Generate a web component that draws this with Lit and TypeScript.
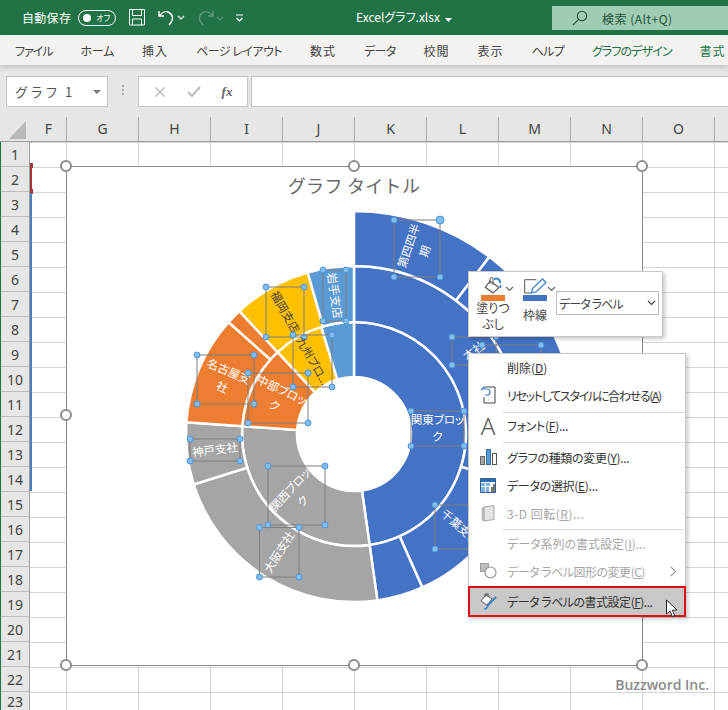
import { LitElement, html, css, svg } from "lit";
import { customElement } from "lit/decorators.js";

const CX = 354, CY = 434;
const BLUE = "#4472C4", ORANGE = "#ED7D31", GRAY = "#A5A5A5", YELLOW = "#FFC000", LBLUE = "#5B9BD5";

function pt(r: number, a: number): [number, number] {
  const t = (a * Math.PI) / 180;
  return [CX + r * Math.sin(t), CY - r * Math.cos(t)];
}
function seg(r0: number, r1: number, a0: number, a1: number) {
  const [x0, y0] = pt(r1, a0), [x1, y1] = pt(r1, a1), [x2, y2] = pt(r0, a1), [x3, y3] = pt(r0, a0);
  const l = a1 - a0 > 180 ? 1 : 0;
  return `M${x0} ${y0}A${r1} ${r1} 0 ${l} 1 ${x1} ${y1}L${x2} ${y2}A${r0} ${r0} 0 ${l} 0 ${x3} ${y3}Z`;
}

const SEGMENTS: [number, number, number, number, string][] = [
  [57, 112, 0, 172, BLUE], [57, 112, 172, 274, GRAY], [57, 112, 274, 317, ORANGE], [57, 112, 317, 343, YELLOW], [57, 112, 343, 360, LBLUE],
  [112, 168, 0, 107, BLUE], [112, 168, 107, 156, BLUE], [112, 168, 156, 172, BLUE],
  [112, 168, 172, 252.5, GRAY], [112, 168, 252.5, 274, GRAY],
  [112, 168, 274, 311.7, ORANGE], [112, 168, 311.7, 317, ORANGE],
  [112, 168, 317, 344, YELLOW], [112, 168, 344, 360, LBLUE],
  [168, 223, 0, 37.4, BLUE], [168, 223, 37.4, 100, BLUE],
];

interface Label { x: number; y: number; w: number; h: number; rot: number; lines: string[]; dark?: boolean; }
const LABELS: Label[] = [
  { x: 394, y: 220, w: 46, h: 57, rot: -71, lines: ["第四四半", "期"] },
  { x: 452, y: 337, w: 44, h: 28, rot: -37, lines: ["本社"] },
  { x: 482, y: 345, w: 59, h: 40, rot: -10, lines: [] },
  { x: 411, y: 411, w: 53, h: 35, rot: 0, lines: ["関東ブロッ", "ク"] },
  { x: 435, y: 505, w: 50, h: 44, rot: 41.5, lines: ["千葉支社"] },
  { x: 268, y: 466, w: 57, h: 59, rot: -47, lines: ["関西ブロッ", "ク"] },
  { x: 259.5, y: 527.5, w: 39.5, h: 49.5, rot: -58, lines: ["大阪支社"] },
  { x: 190, y: 439, w: 50, h: 22, rot: -7, lines: ["神戸支社"] },
  { x: 197, y: 355, w: 57, h: 49, rot: 23, lines: ["名古屋支", "社"] },
  { x: 248, y: 373, w: 60, h: 50, rot: 25.5, lines: ["中部ブロッ", "ク"] },
  { x: 266, y: 287, w: 38, h: 50, rot: 60.5, lines: ["福岡支店"], dark: true },
  { x: 293, y: 335, w: 39, h: 52, rot: 60, lines: ["九州ブロ..."], dark: true },
  { x: 323, y: 270, w: 23, h: 51, rot: 82, lines: ["岩手支店"] },
];

const TABS: [string, number, boolean][] = [
  ["ファイル", -1, false], ["ホーム", -0.3, false], ["挿入", 1, false], ["ページ レイアウト", -0.5, false], ["数式", 1, false],
  ["データ", -0.7, false], ["校閲", 1, false], ["表示", 1, false], ["ヘルプ", -0.7, false], ["グラフのデザイン", -0.9, true], ["書式", 1, true],
];
const COLS: [string, number][] = [["F", 36], ["G", 72], ["H", 72], ["I", 72], ["J", 72], ["K", 72], ["L", 72], ["M", 72], ["N", 72], ["O", 72], ["", 14]];
const ROWS = Array.from({ length: 23 }, (_, i) => i + 1);

@customElement("app-root")
export class AppRoot extends LitElement {
  static styles = css`
    :host { display: block; position: relative; width: 728px; height: 710px; overflow: hidden; background: #fff;
      font-family: "Noto Sans CJK JP", "Noto Sans", sans-serif; font-size: 12px; font-feature-settings: "palt"; color: #444; }
    .titlebar { height: 35px; background: #217346; color: #fff; display: flex; align-items: center; padding-left: 22px; box-sizing: border-box; }
    .autosave { font-size: 12px; letter-spacing: 0.3px; }
    .toggle { width: 38px; height: 16px; border: 1px solid #fff; border-radius: 9px; box-sizing: border-box; margin-left: 7px; display: flex; align-items: center; padding-left: 4px; }
    .dot { width: 8px; height: 8px; border-radius: 50%; background: #fff; }
    .off { font-size: 8px; margin-left: 5px; }
    .qat { display: flex; margin-left: 13px; }
    .qat svg { display: block; }
    .undo { margin-left: 12px; }
    .redo { margin-left: 7px; }
    .more-qat { margin-left: 6px; }
    .docname { position: absolute; left: 356px; top: 8px; line-height: 18px; font-size: 12px; white-space: nowrap; }
    .search { position: absolute; left: 552px; top: 6px; width: 176px; height: 24px; background: #9FCDB3; color: #24513a; display: flex; align-items: center; padding-left: 20px; box-sizing: border-box; }
    .search span { margin-left: 14px; font-size: 12px; letter-spacing: 0.5px; }
    .tabs { height: 30px; background: #F3F2F1; display: flex; align-items: center; gap: 28px; padding-left: 15px; white-space: nowrap; font-size: 12px; color: #444; position: relative; z-index: 1; box-shadow: 0 2px 5px rgba(0,0,0,.18); }
    .tab.green { color: #217346; }
    .formula { height: 52px; background: #E6E6E6; display: flex; align-items: flex-start; padding: 11px 0 0 6px; box-sizing: border-box; }
    .box { background: #fff; border: 1px solid #C6C6C6; height: 31px; box-sizing: border-box; display: flex; align-items: center; }
    .namebox { width: 102px; padding-left: 8px; font-size: 13px; letter-spacing: 2px; color: #555; justify-content: space-between; padding-right: 6px; font-feature-settings: normal; }
    .caret { width: 0; height: 0; border-left: 4px solid transparent; border-right: 4px solid transparent; border-top: 4px solid #777; }
    .grip { width: 30px; display: flex; flex-direction: column; align-items: center; gap: 2px; padding-top: 9px; }
    .grip i { width: 2px; height: 2px; background: #aaa; display: block; }
    .fxbox { width: 110px; justify-content: space-around; color: #bbb; padding: 0 4px; }
    .fx { font-family: "Liberation Serif", serif; font-style: italic; font-weight: bold; color: #666; font-size: 13px; }
    .input { flex: 1; margin-left: 3px; border-right: 0; }
    .colheads { height: 24px; background: #E6E6E6; display: flex; padding-left: 31px; border-bottom: 1px solid #9E9E9E; box-sizing: content-box; position: relative; font-family: "Noto Sans", sans-serif; font-size: 14px; color: #444; }
    .colhead { text-align: center; line-height: 24px; border-right: 1px solid #ABABAB; box-sizing: border-box; flex: none; }
    .corner { position: absolute; left: 9px; top: 4px; width: 0; height: 0; border-left: 17px solid transparent; border-bottom: 18px solid #B9B9B9; }
    .sheet { display: flex; height: 570px; overflow: hidden; margin-top: -1px; border-left: 1px solid #217346; }
    .rows { width: 28px; background: #E6E6E6; flex: none; border-right: 1px solid #9E9E9E; margin-top: 1px; }
    .rownum { height: 25px; box-sizing: border-box; border-bottom: 1px solid #BDBDBD; text-align: center; line-height: 25px; font-size: 14px; font-family: "Noto Sans", sans-serif; color: #444; }
    .rownum:last-child { height: 19px; line-height: 18px; padding-top: 1px; border-bottom: 0; }
    .cells { flex: 1; background-image: linear-gradient(to right, #D4D4D4 1px, transparent 1px), linear-gradient(to bottom, #D4D4D4 1px, transparent 1px); background-size: 72px 25px; background-position: 36px 0, 0 1px; }
    .overlay { position: absolute; left: 0; top: 0; }
    .title { font-size: 18px; fill: #666; text-anchor: middle; font-feature-settings: normal; letter-spacing: 0.3px; }
    .dl { font-size: 11.5px; text-anchor: middle; fill: #fff; }
    .dl.dark { fill: #404040; }
    .toolbar { position: absolute; left: 468px; top: 271px; width: 195px; height: 66px; box-sizing: border-box; background: #fff; border: 1px solid #C8C8C8; box-shadow: 2px 2px 4px rgba(0,0,0,.22); display: flex; padding-left: 11px; }
    .tool { width: 26px; display: flex; flex-direction: column; align-items: center; position: relative; flex: none; }
    .tool .ico { display: block; margin-top: 4px; }
    .tool .bar { width: 24px; height: 6px; flex: none; }
    .tool .bar.o { background: #ED7D31; }
    .tool .bar.b { background: #4472C4; }
    .tool .lbl { font-size: 12px; line-height: 16px; text-align: center; margin-top: -1px; white-space: nowrap; color: #444; }
    .tool .lbl.single { margin-top: 6px; }
    .tool.second { margin-left: 16px; }
    .tool .cv { position: absolute; left: 25px; top: 14px; }
    .select { position: absolute; left: 87px; top: 19px; width: 103px; height: 24px; box-sizing: border-box; border: 1px solid #BDBDBD; display: flex; align-items: center; justify-content: space-between; padding: 0 2px 0 2px; font-size: 12px; color: #444; letter-spacing: -0.9px; }
    .menu { position: absolute; left: 468px; top: 353px; width: 218px; box-sizing: border-box; background: #fff; border: 1px solid #C8C8C8; border-bottom: 0; box-shadow: 2px 2px 4px rgba(0,0,0,.22); }
    .item { height: 28px; box-sizing: border-box; padding-bottom: 2px; display: flex; align-items: center; position: relative; color: #333; white-space: nowrap; }
    .item .ic { width: 38px; flex: none; display: flex; justify-content: center; align-items: center; }
    .item.h27 { height: 27px; }
    .item.dis { color: #A6A6A6; }
    .item.sel { height: 31px; margin: 0 -1px; padding-bottom: 0; background: #C8C8C8; border: 2px solid #D9101A; }
    .item.sel .ic { width: 37px; }
    .ls-13 { letter-spacing: -1.3px; }
    .ls-5 { letter-spacing: -0.5px; }
    .ls-3 { letter-spacing: -0.3px; }
    .ls5 { letter-spacing: 0.5px; }
    .sep { height: 1px; background: #DADADA; margin-left: 34px; margin-right: 1px; }
    .sep.a { margin-top: 2px; }
    .sep.b { margin-top: 2px; margin-bottom: 1px; }
    .sep.c { margin-top: 1px; margin-bottom: 1px; }
    .bigA { font-size: 24px; color: #555; font-family: "Noto Sans", sans-serif; font-weight: 300; line-height: 24px; }
    .more { position: absolute; right: 8px; top: 8px; }
    .cursor { position: absolute; left: 665px; top: 599px; }
    .mark { position: absolute; left: 30px; width: 1.5px; }
    .mark.red { top: 166px; height: 25px; background: #A5373C; }
    .mark.redc { width: 3px; height: 5px; background: #A5373C; }
    .mark.t1 { top: 163px; }
    .mark.t2 { top: 189px; }
    .mark.blue { top: 193px; height: 298px; background: #4A7EBB; }
    .wm { position: absolute; right: 19px; top: 675px; font-family: "Open Sans", sans-serif; font-weight: 600; font-size: 14px; line-height: 20px; color: #8A8A8A; white-space: nowrap; }
  `;

  private chart() {
    const handle = (x: number, y: number) => svg`<circle cx=${x} cy=${y} r="5" fill="#fff" stroke="#8C8C8C" stroke-width="2"/>`;
    const dot = (x: number, y: number, r = 3) => svg`<circle cx=${x} cy=${y} r=${r} fill="#83BDEE" stroke="#4E95D9" stroke-width="1"/>`;
    return svg`
      <svg class="overlay" width="728" height="710" viewBox="0 0 728 710">
        <rect x="66.5" y="166.5" width="576" height="499" fill="#fff" stroke="#8C8C8C" stroke-width="1"/>
        ${[[66, 166], [354, 166], [642, 166], [66, 415], [642, 415], [66, 665], [354, 665], [642, 665]].map(([x, y]) => handle(x, y))}
        <text class="title" x="354" y="193">グラフ タイトル</text>
        ${SEGMENTS.map(([a, b, c, d, col]) => svg`<path d=${seg(a, b, c, d)} fill=${col} stroke="#fff" stroke-width="2.5"/>`)}
        ${LABELS.map((l) => {
          const cx = l.x + l.w / 2, cy = l.y + l.h / 2;
          const top = cy - ((l.lines.length - 1) * 17) / 2 + 4;
          return svg`
            <rect x=${l.x} y=${l.y} width=${l.w} height=${l.h} fill="none" stroke="#7F7F7F" stroke-width="1"/>
            <g transform="rotate(${l.rot} ${cx} ${cy})">
              ${l.lines.map((t, i) => svg`<text class="dl ${l.dark ? "dark" : ""}" x=${cx} y=${top + i * 17}>${t}</text>`)}
            </g>
            ${dot(l.x, l.y)}${dot(l.x + l.w, l.y, l.x === 394 ? 4 : 3)}${dot(l.x, l.y + l.h)}${dot(l.x + l.w, l.y + l.h)}`;
        })}
      </svg>`;
  }

  private chev(color = "#666") {
    return html`<svg class="cv" width="9" height="6" viewBox="0 0 9 6"><path d="M1 1l3.500 3.500L8 1" fill="none" stroke=${color} stroke-width="1.200"/></svg>`;
  }

  render() {
    return html`
      <div class="titlebar">
        <span class="autosave">自動保存</span>
        <div class="toggle"><span class="dot"></span><span class="off">オフ</span></div>
        <div class="qat">
          <svg width="17" height="18" viewBox="0 0 17 18" fill="none" stroke="#fff" stroke-width="1"><path d="M.5.5h15v15.500H.5zM3.500.5v6h9v-6M3.500 16v-6h9v6"/></svg>
          <svg class="undo" width="32" height="18" viewBox="0 0 32 18" fill="none" stroke="#fff" stroke-width="1.400"><path d="M1 2v5h5M1.500 7C4 3 8 2 11 3.500c4 2 4.500 7 2 10l-2 2.500"/><path d="M20 7l3 3 3-3" stroke-width="1.100"/></svg>
          <svg class="redo" width="32" height="18" viewBox="0 0 32 18" fill="none" stroke="#5b9a78" stroke-width="1.400"><path d="M16 2v5h-5M15.500 7C13 3 9 2 6 3.500c-4 2-4.500 7-2 10l2 2.500"/><path d="M20 8l3 3 3-3" stroke-width="1.100"/></svg>
          <svg class="more-qat" width="10" height="18" viewBox="0 0 10 18" fill="none" stroke="#fff" stroke-width="1"><path d="M1 6h7"/><path d="M1.500 9l3 3 3-3" stroke-width="1.200"/></svg>
        </div>
        <span class="docname">Excelグラフ.xlsx&nbsp;&nbsp;<svg width="7" height="4" viewBox="0 0 7 4"><path d="M0 0h7L3.500 4z" fill="#fff"/></svg></span>
        <div class="search">
          <svg width="16" height="16" viewBox="0 0 16 16" fill="none" stroke="#24513a" stroke-width="1.100"><circle cx="10" cy="6" r="4.700"/><path d="M6.600 9.400L1 15"/></svg>
          <span>検索 (Alt+Q)</span>
        </div>
      </div>
      <div class="tabs">
        ${TABS.map(([t, ls, green]) => html`<span class="tab ${green ? "green" : ""}" style="letter-spacing:${ls}px">${t}</span>`)}
      </div>
      <div class="formula">
        <div class="box namebox"><span>グラフ 1</span><span class="caret"></span></div>
        <div class="grip"><i></i><i></i><i></i></div>
        <div class="box fxbox">
          <svg width="12" height="12" viewBox="0 0 12 12" fill="none" stroke="#bbb" stroke-width="1.500"><path d="M1.500 1.500l9 9M10.500 1.500l-9 9"/></svg>
          <svg width="14" height="12" viewBox="0 0 14 12" fill="none" stroke="#bbb" stroke-width="2"><path d="M1 6l4 4 8-9"/></svg>
          <span class="fx">fx</span>
        </div>
        <div class="box input"></div>
      </div>
      <div class="colheads">
        <span class="corner"></span>
        ${COLS.map(([c, w]) => html`<div class="colhead" style="width:${w}px">${c}</div>`)}
      </div>
      <div class="sheet">
        <div class="rows">${ROWS.map((r) => html`<div class="rownum">${r}</div>`)}</div>
        <div class="cells"></div>
      </div>
      <div class="mark red"></div>
      <div class="mark redc t1"></div>
      <div class="mark redc t2"></div>
      <div class="mark blue"></div>
      ${this.chart()}
      <div class="toolbar">
        <div class="tool">
          <svg class="ico" width="24" height="19" viewBox="0 0 24 19" fill="none"><path d="M4.300 11.300L9 5l9 6.500L12 17z" stroke="#555" stroke-width="1.100" fill="#fff"/><path d="M9 8V3a1.500 1.500 0 0 1 3 0v6" stroke="#555"/><path d="M13 3.500c3-2 6-.5 6.300 3.500" stroke="#3F86C6" stroke-width="2"/><path d="M19.300 8l-1 3a1.200 1.200 0 0 0 2.300 0z" fill="#3F86C6"/></svg>
          <div class="bar o"></div>
          <div class="lbl">塗りつ<br />ぶし</div>
          ${this.chev()}
        </div>
        <div class="tool second">
          <svg class="ico" width="24" height="19" viewBox="0 0 24 19" fill="none"><path d="M13.300 3.700H1.700V17h6.600" stroke="#555" stroke-width="1"/><path d="M8.500 17l1-4.500 10-9.500 3.500 3.500L13 16z" stroke="#3F86C6" stroke-width="1.300" fill="#fff"/></svg>
          <div class="bar b"></div>
          <div class="lbl single">枠線</div>
          ${this.chev()}
        </div>
        <div class="select"><span>データ ラベル</span><svg width="9" height="6" viewBox="0 0 9 6"><path d="M1 1l3.500 3.500L8 1" fill="none" stroke="#444" stroke-width="1.200"/></svg></div>
      </div>
      <div class="menu">
        <div class="item"><span class="ic"></span>削除(<u>D</u>)</div>
        <div class="item ls-13"><span class="ic">
          <svg width="18" height="20" viewBox="0 0 18 20" fill="none"><path d="M6 2h10v16H5v-6" stroke="#444"/><path d="M2 5l3-3v2h3a3 3 0 0 1 0 6H6" stroke="#3F7FBF" stroke-width="1.200"/><path d="M9 12h.5M12 12h.5M9 15h.5" stroke="#666"/></svg>
        </span>リセットしてスタイルに合わせる(<u>A</u>)</div>
        <div class="sep a"></div>
        <div class="item h27 ls-3"><span class="ic bigA">A</span>フォント(<u>F</u>)...</div>
        <div class="sep b"></div>
        <div class="item ls-3"><span class="ic">
          <svg width="17" height="16" viewBox="0 0 17 16"><rect x=".5" y="7.500" width="4" height="8" fill="#A5A5A5" stroke="#666"/><rect x="6.500" y=".5" width="4" height="15" fill="#5B9BD5" stroke="#2F6EA8"/><rect x="12.500" y="4.500" width="4" height="11" fill="#fff" stroke="#555"/></svg>
        </span>グラフの種類の変更(<u>Y</u>)...</div>
        <div class="item ls-3"><span class="ic">
          <svg width="16" height="15" viewBox="0 0 16 15" fill="none"><path d="M.5.5h15v14H.5z" stroke="#2F5F98" fill="#fff"/><path d="M1 1h14v3H1z" fill="#2F6EB5"/><path d="M1 5h4v3H1zM6 5h4v3H6zM1 9h4v5H1zM6 9h3v5H6z" fill="#7FB2E5"/><path d="M11 14V9h2v5zM13 14V6h2v8z" fill="#777"/></svg>
        </span>データの選択(<u>E</u>)...</div>
        <div class="item dis ls5"><span class="ic">
          <svg width="15" height="17" viewBox="0 0 15 17"><path d="M3 2l10-1.500v14L3 16z" fill="#E4E4E4" stroke="#A8A8A8"/><path d="M1 3l2-1v14l-2-1z" fill="#BDBDBD" stroke="#A8A8A8" stroke-width=".6"/></svg>
        </span>3-D 回転(<u>R</u>)...</div>
        <div class="sep c"></div>
        <div class="item h27 dis"><span class="ic"></span>データ系列の書式設定(<u>I</u>)...</div>
        <div class="item dis ls-5"><span class="ic">
          <svg width="17" height="16" viewBox="0 0 17 16"><rect x=".5" y=".5" width="8" height="8" fill="#BDBDBD" stroke="#A0A0A0"/><circle cx="10.500" cy="9.500" r="5.500" fill="#fff" stroke="#8E8E8E" stroke-width="1.100"/></svg>
        </span>データ ラベル図形の変更(<u>C</u>)
          <svg class="more" width="7" height="11" viewBox="0 0 7 11"><path d="M1 1l4.500 4.500L1 10" fill="none" stroke="#9A9A9A" stroke-width="1.100"/></svg>
        </div>
        <div class="item sel ls-5"><span class="ic">
          <svg width="18" height="17" viewBox="0 0 18 17" fill="none"><path d="M1 8l5-6 6 4-5 6z" fill="#fff" stroke="#555"/><path d="M5 4V1h3v3" stroke="#555"/><path d="M7 14l2-3 7-7" stroke="#3F7FBF" stroke-width="2"/><path d="M4 16c2 0 3-1 3-2" stroke="#3F7FBF" stroke-width="1.500"/></svg>
        </span>データ ラベルの書式設定(<u>F</u>)...</div>
      </div>
      <svg class="cursor" width="14" height="20" viewBox="0 0 14 20"><path d="M1.500 1v14l3.500-3 2.300 5.500 2.400-1-2.300-5.300 4.600-.2z" fill="#fff" stroke="#222" stroke-width="1"/></svg>
      <div class="wm">Buzzword Inc.</div>
    `;
  }
}
